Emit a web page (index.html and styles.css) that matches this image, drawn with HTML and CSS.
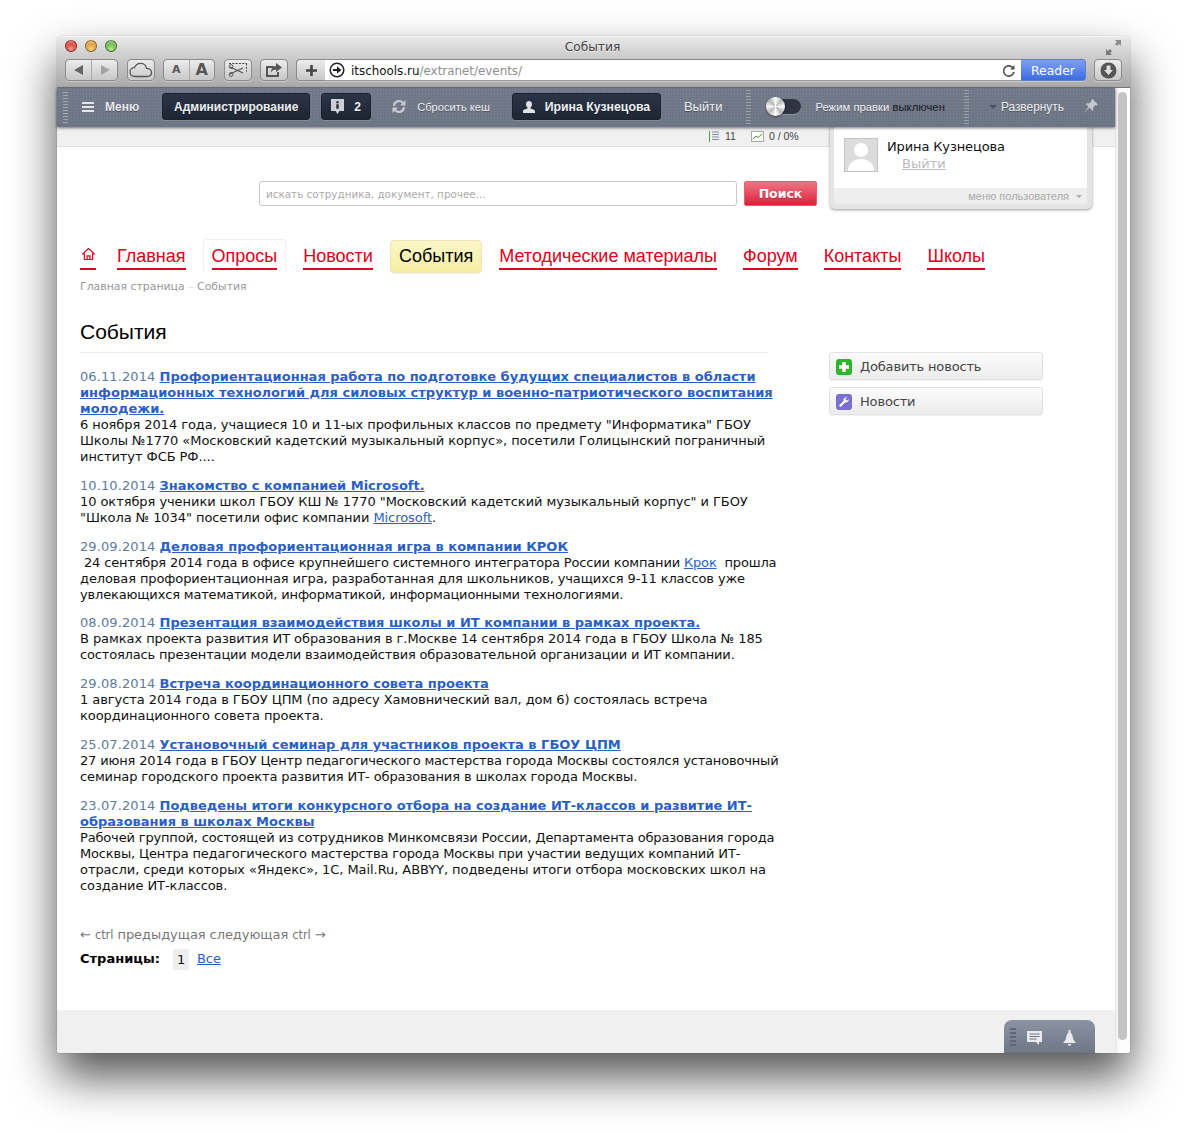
FILE: index.html
```html
<!DOCTYPE html>
<html lang="ru">
<head>
<meta charset="utf-8">
<title>События</title>
<link rel="stylesheet" href="styles.css">
</head>
<body>
<div class="window">
  <header class="chrome">
    <div class="titlebar">
      <div class="lights"><i class="light red"></i><i class="light amber"></i><i class="light green"></i></div>
      <div class="win-title">События</div>
      <svg class="fullscreen" width="17" height="17" viewBox="0 0 17 17"><path d="M10 1h6v6l-2-2-2 2-2-2 2-2z" fill="#8d8d8d"/><path d="M7 16H1v-6l2 2 2-2 2 2-2 2z" fill="#7a7a7a"/></svg>
    </div>
    <div class="toolbar">
      <div class="tbtn seg back">
        <span class="seg-cell"><svg width="12" height="12" viewBox="0 0 12 12"><path d="M10 1v10L1 6z" fill="#666"/></svg></span>
        <span class="seg-cell"><svg width="12" height="12" viewBox="0 0 12 12"><path d="M2 1v10l9-5z" fill="#a2a2a2"/></svg></span>
      </div>
      <div class="tbtn cloud"><svg width="24" height="16" viewBox="0 0 24 16"><path d="M6 14.500C3 14.500 1 12.500 1 10s2-4.300 4.500-4.300C6.500 3 9 1.300 11.500 1.300c3.200 0 5.500 2.200 6 5 2.800 0 5 1.800 5 4.200s-2 4-4.500 4z" fill="none" stroke="#555" stroke-width="1.300"/></svg></div>
      <div class="tbtn seg fonts"><span class="seg-cell small-a">A</span><span class="seg-cell big-a">A</span></div>
      <div class="tbtn clip"><svg width="20" height="16" viewBox="0 0 20 16"><path d="M1 1.500h18M18.500 1.500v8" stroke="#444" stroke-dasharray="2 1.300" fill="none"/><path d="M2 5l13 6M2 12l13-6" stroke="#555" stroke-width="1.200"/><circle cx="3" cy="4.500" r="1.900" fill="none" stroke="#555"/><circle cx="3" cy="12.500" r="1.900" fill="none" stroke="#555"/></svg></div>
      <div class="tbtn share"><svg width="18" height="15" viewBox="0 0 18 15"><path d="M1 3h8v2H3v7h9V9h2v5H1z" fill="#555"/><path d="M11 0l6 4.500L11 9V6.500c-2.500 0-4 1-5 3 0-4 2-6 5-6.500z" fill="#555"/></svg></div>
      <div class="urlbar">
        <div class="plus"><svg width="13" height="13" viewBox="0 0 13 13"><path d="M5.200 1h2.600v4.200H12v2.600H7.800V12H5.200V7.800H1V5.200h4.200z" fill="#444"/></svg></div>
        <div class="field">
          <svg class="go" width="16" height="16" viewBox="0 0 16 16"><circle cx="8" cy="8" r="6.800" fill="#fff" stroke="#222" stroke-width="1.500"/><path d="M3.800 7h4.200V4.300L12.400 8 8 11.700V9H3.800z" fill="#222"/></svg>
          <span class="url"><b class="host">itschools.ru</b>/extranet/events/</span>
          <svg class="reload" width="12" height="13" viewBox="0 0 12 13"><path d="M10 8a4.300 4.300 0 1 1-1.300-4.200L7 5.500h4.500V1L10 2.500A6 6 0 1 0 11.800 8z" fill="#555"/></svg>
        </div>
        <div class="reader">Reader</div>
      </div>
      <div class="tbtn download"><svg width="17" height="17" viewBox="0 0 17 17"><circle cx="8.500" cy="8.500" r="8" fill="#555"/><path d="M6.500 3.500h4V8h2.500l-4.500 5L4 8h2.500z" fill="#e0e0e0"/></svg></div>
    </div>
  </header>

  <div class="view">
    <div class="page">
      <nav class="panel">
        <i class="grip"></i>
        <a class="panel-menu"><svg width="12" height="10" viewBox="0 0 12 10"><path d="M0 0h12v2H0zM0 4h12v2H0zM0 8h12v2H0z" fill="#e4e6ea"/></svg>Меню</a>
        <a class="dark-btn admin">Администрирование</a>
        <a class="dark-btn info"><svg width="13" height="15" viewBox="0 0 13 15"><path d="M0 0h13v12H8.500L6.500 15l-2-3H0z" fill="#ccd0d6"/><path d="M5.300 2.300h2.400v1.900H5.300zM5.300 5.300h2.400v4.500H5.300z" fill="#232b3a"/></svg><span>2</span></a>
        <a class="cache"><svg width="18" height="17" viewBox="0 0 18 17"><path d="M3 8a6 6 0 0 1 10.500-4L15.500 2v5.500H10l2-2A4 4 0 0 0 5 8z" fill="#c9ccd2"/><path d="M15 9a6 6 0 0 1-10.500 4L2.500 15V9.500H8l-2 2A4 4 0 0 0 13 9z" fill="#c9ccd2"/></svg>Сбросить кеш</a>
        <a class="dark-btn user"><svg width="12" height="12" viewBox="0 0 12 12"><path d="M6 0c2 0 3 1.400 3 3.200 0 1.500-.7 2.800-1.500 3.300v.9c1.900.5 4.500 1 4.500 3V12H0v-1.600c0-2 2.600-2.500 4.500-3v-.9C3.700 6 3 4.700 3 3.200 3 1.400 4 0 6 0z" fill="#dfe2e6"/></svg>Ирина Кузнецова</a>
        <a class="logout">Выйти</a>
        <i class="dots sep-a"></i>
        <span class="toggle"><i class="knob"></i></span>
        <span class="mode">Режим правки <b class="mode-off">выключен</b></span>
        <i class="dots sep-b"></i>
        <a class="expand"><i class="caret"></i>Развернуть</a>
        <svg class="pin" width="15" height="15" viewBox="0 0 15 15"><path d="M9.500 0L15 5.500l-1.500 1-1-.5-2.500 2.500c.5 1.500.2 2.500-.5 3.500L6.500 8.500 1 14l4.500-6.500L2.500 5c1-.8 2-1 3.500-.5L8.500 2l-.2-1z" fill="#c3c7ce"/></svg>
      </nav>

      <div class="stats">
        <span class="stat"><svg width="11" height="11" viewBox="0 0 11 11"><path d="M.5 0v11" stroke="#5a9e3a"/><path d="M3 1h7M3 3.500h7M3 6h7M3 8.500h7" stroke="#7f8fa8"/></svg>11</span>
        <span class="stat"><svg width="13" height="11" viewBox="0 0 13 11"><rect x=".5" y=".5" width="12" height="10" fill="#fff" stroke="#aaa"/><path d="M2 8l3-3 2 1.500L11 3" fill="none" stroke="#4a9a2e"/></svg>0 / 0%</span>
      </div>

      <div class="search">
        <div class="search-input">искать сотрудника, документ, прочее...</div>
        <div class="search-btn">Поиск</div>
      </div>

      <ul class="menu">
        <li class="menu-item home"><a><svg width="13" height="12" viewBox="0 0 14 13"><path d="M7 .5L.5 6.500h2V12.500h9V6.500h2zM5.500 12V8.500h3V12" fill="none" stroke="#e0001b" stroke-width="1.300"/></svg></a></li>
        <li class="menu-item"><a>Главная</a></li>
        <li class="menu-item hovered"><a>Опросы</a></li>
        <li class="menu-item"><a>Новости</a></li>
        <li class="menu-item active"><a>События</a></li>
        <li class="menu-item"><a>Методические материалы</a></li>
        <li class="menu-item"><a>Форум</a></li>
        <li class="menu-item"><a>Контакты</a></li>
        <li class="menu-item"><a>Школы</a></li>
      </ul>

      <div class="crumbs">Главная страница <span class="crumb-sep">–</span> События</div>

      <div class="columns">
        <main class="main">
          <h1 class="heading">События</h1>
          <article class="news"><span class="date">06.11.2014</span> <a class="news-title">Профориентационная работа по подготовке будущих специалистов в области информационных технологий для силовых структур и военно-патриотического воспитания молодежи.</a><br>6 ноября 2014 года, учащиеся 10 и 11-ых профильных классов по предмету "Информатика" ГБОУ Школы №1770 «Московский кадетский музыкальный корпус», посетили Голицынский пограничный институт ФСБ РФ....</article>
          <article class="news"><span class="date">10.10.2014</span> <a class="news-title">Знакомство с компанией Microsoft.</a><br>10 октября ученики школ ГБОУ КШ № 1770 "Московский кадетский музыкальный корпус" и ГБОУ "Школа № 1034" посетили офис компании <a class="link">Microsoft</a>.</article>
          <article class="news"><span class="date">29.09.2014</span> <a class="news-title">Деловая профориентационная игра в компании КРОК</a>
            <span class="line fit-s">&nbsp;24 сентября 2014 года в офисе крупнейшего системного интегратора России компании <a class="link">Крок</a>&nbsp; прошла</span>
            <span class="line fit-xs">деловая профориентационная игра, разработанная для школьников, учащихся 9-11 классов уже</span>
            <span class="line fit-s">увлекающихся математикой, информатикой, информационными технологиями.</span></article>
          <article class="news"><span class="date">08.09.2014</span> <a class="news-title">Презентация взаимодействия школы и ИТ компании в рамках проекта.</a>
            <span class="line">В рамках проекта развития ИТ образования в г.Москве 14 сентября 2014 года в ГБОУ Школа № 185</span>
            <span class="line fit-s">состоялась презентации модели взаимодействия образовательной организации и ИТ компании.</span></article>
          <article class="news"><span class="date">29.08.2014</span> <a class="news-title">Встреча координационного совета проекта</a><br>1 августа 2014 года в ГБОУ ЦПМ (по адресу Хамовнический вал, дом 6) состоялась встреча координационного совета проекта.</article>
          <article class="news"><span class="date">25.07.2014</span> <a class="news-title">Установочный семинар для участников проекта в ГБОУ ЦПМ</a>
            <span class="line fit-s">27 июня 2014 года в ГБОУ Центр педагогического мастерства города Москвы состоялся установочный</span>
            <span class="line fit-xs">семинар городского проекта развития ИТ- образования в школах города Москвы.</span></article>
          <article class="news"><span class="date">23.07.2014</span> <a class="news-title">Подведены итоги конкурсного отбора на создание ИТ-классов и развитие ИТ-образования в школах Москвы</a>
            <span class="line fit-s">Рабочей группой, состоящей из сотрудников Минкомсвязи России, Департамента образования города</span>
            <span class="line fit-s">Москвы, Центра педагогического мастерства города Москвы при участии ведущих компаний ИТ-</span>
            <span class="line">отрасли, среди которых «Яндекс», 1С, Mail.Ru, ABBYY, подведены итоги отбора московских школ на</span>
            <span class="line">создание ИТ-классов.</span></article>
          <div class="prevnext">← <span class="ctrl">ctrl</span> предыдущая следующая <span class="ctrl">ctrl</span> →</div>
          <div class="pager"><b class="pager-label">Страницы:</b><span class="pager-cur">1</span><a class="link">Все</a></div>
        </main>
        <aside class="side">
          <a class="side-btn"><svg width="16" height="16" viewBox="0 0 16 16"><rect width="16" height="16" rx="3" fill="#2eb52a"/><path d="M6.300 3h3.400v3.300H13v3.400H9.700V13H6.300V9.700H3V6.300h3.300z" fill="#fff"/></svg>Добавить новость</a>
          <a class="side-btn"><svg width="16" height="16" viewBox="0 0 16 16"><rect width="16" height="16" rx="3" fill="#7b6fd0"/><path d="M3 11.500L7.500 7C7 5 8.500 3 11 3.300L9.300 5.200l1.500 1.500L12.700 5C13 7.500 11 9 9 8.500L4.500 13z" fill="#fff"/></svg>Новости</a>
        </aside>
      </div>

      <footer class="page-foot">
        <div class="dock">
          <i class="dock-grip"></i>
          <svg width="15" height="15" viewBox="0 0 15 15"><path d="M0 0h15v11h-3v3l-3-3H0z" fill="#e8eaee"/><path d="M2.500 3h10M2.500 5.500h10M2.500 8h7" stroke="#6d7585"/></svg>
          <svg width="15" height="17" viewBox="0 0 15 17"><path d="M6.500 0h2v2.500c1.500 1 2 3 2.500 5.500.4 2 1.500 3.500 3 5H1c1.500-1.500 2.600-3 3-5 .5-2.500 1-4.500 2.500-5.500zM6 14h3v1.500H6z" fill="#e8eaee"/></svg>
        </div>
      </footer>

      <div class="user-pop">
        <div class="user-pop-body">
          <svg width="34" height="34" viewBox="0 0 34 34"><rect width="34" height="34" fill="#c4c4c4"/><rect x="1" y="1" width="32" height="32" fill="#dcdcdc"/><circle cx="17" cy="12" r="7" fill="#fff"/><path d="M4 33c0-8 6-12 13-12s13 4 13 12z" fill="#fff"/></svg>
          <div class="user-pop-text">
            <div class="user-pop-name">Ирина Кузнецова</div>
            <a class="user-pop-out">Выйти</a>
          </div>
        </div>
        <div class="user-pop-foot">меню пользователя<i class="pop-caret"></i></div>
      </div>
    </div>
    <div class="scroll"><i class="thumb"></i></div>
  </div>
</div>
</body>
</html>
```

FILE: styles.css
```css
* { box-sizing: border-box; }
html, body { margin: 0; height: 1132px; overflow: hidden; background: #fff; }
body { padding: 36px 0 0 57px; font: 13px/16px "DejaVu Sans", Verdana, sans-serif; color: #111; }
ul { list-style: none; margin: 0; padding: 0; }
a { cursor: pointer; }

.window { width: 1073px; height: 1017px; display: flex; flex-direction: column; border-radius: 5px 5px 3px 3px; background: #fff; box-shadow: 0 24px 46px rgba(0,0,0,.68), 0 0 1px rgba(0,0,0,.6); }

/* browser chrome */
.chrome { height: 52px; flex: none; background: linear-gradient(#e9e9e9, #d2d2d2 30%, #a9a9a9); border-radius: 5px 5px 0 0; border-bottom: 1px solid #777; border-top: 1px solid #f4f4f4; padding: 0 8px; }
.titlebar { height: 22px; display: flex; align-items: center; justify-content: center; position: relative; }
.lights { position: absolute; left: 0; top: 3px; display: flex; gap: 8px; }
.light { width: 12px; height: 12px; border-radius: 50%; border: 1px solid rgba(0,0,0,.35); box-shadow: inset 0 2px 2px rgba(255,255,255,.4); }
.red { background: radial-gradient(circle at 50% 80%, #f59a95, #d8312b 65%); }
.amber { background: radial-gradient(circle at 50% 80%, #f7d68c, #d98f22 65%); }
.green { background: radial-gradient(circle at 50% 80%, #bce79a, #5fae3c 65%); }
.win-title { font-size: 12.200px; color: #444; text-shadow: 0 1px 0 rgba(255,255,255,.6); margin: -3px 2px 0 0; }
.fullscreen { position: absolute; right: 0; top: 2px; }
.toolbar { display: flex; align-items: flex-start; height: 22px; }
.tbtn { height: 22px; border: 1px solid #8b8b8b; border-radius: 4px; background: linear-gradient(#ececec, #c8c8c8); display: flex; align-items: center; justify-content: center; box-shadow: 0 1px 0 rgba(255,255,255,.35); flex: none; }
.back { width: 53px; }
.seg-cell { flex: 1; height: 100%; display: flex; align-items: center; justify-content: center; }
.seg-cell + .seg-cell { border-left: 1px solid #aaa; }
.cloud { width: 28px; margin-left: 9px; }
.fonts { width: 52px; margin-left: 8px; font-family: "DejaVu Sans", sans-serif; color: #555; font-weight: 700; }
.small-a { font-size: 11px; }
.big-a { font-size: 16px; }
.clip { width: 28px; margin-left: 9px; }
.share { width: 28px; margin-left: 8px; }
.urlbar { flex: 1; display: flex; height: 22px; margin-left: 8px; border-radius: 4px; box-shadow: 0 1px 0 rgba(255,255,255,.35); }
.plus { width: 29px; flex: none; border: 1px solid #8b8b8b; border-right: 0; border-radius: 4px 0 0 4px; background: linear-gradient(#ececec, #c8c8c8); display: flex; align-items: center; justify-content: center; }
.field { flex: 1; display: flex; align-items: center; background: #fff; border-top: 1px solid #8b8b8b; border-bottom: 1px solid #999; padding: 0 6px 0 4px; }
.go { flex: none; }
.url { margin-left: 6px; padding-top: 1px; font-size: 11.900px; color: #8f8f8f; flex: 1; }
.host { font-weight: 400; color: #111; }
.reader { width: 65px; flex: none; background: linear-gradient(#7f9ff2, #3c6ce2); color: #fff; border: 1px solid #5c7fc9; border-left: 0; border-radius: 0 4px 4px 0; font-size: 12.400px; line-height: 22px; text-align: center; }
.download { width: 28px; margin-left: 8px; }

/* page */
.view { flex: 1; display: flex; min-height: 0; }
.page { flex: 1; display: flex; flex-direction: column; position: relative; min-width: 0; }
.scroll { width: 15px; flex: none; background: linear-gradient(90deg, #f0f0f0, #fdfdfd 30%); border-left: 1px solid #e6e6e6; padding: 4px 2px 0 2px; border-radius: 0 0 3px 0; }
.thumb { display: block; width: 9px; height: 948px; background: #c4c4c4; border-radius: 5px; }

.panel { height: 39px; flex: none; display: flex; align-items: center; position: relative; z-index: 2; color: #e6e8ec; font-family: "Liberation Sans", Arial, sans-serif; font-weight: 700; font-size: 12px; padding: 0 0 2px 6px; background: radial-gradient(circle at 1px 1px, rgba(40,46,60,.08) .7px, transparent 1px) 0 0/3px 3px, linear-gradient(#767d8d, #717888); box-shadow: 0 1px 3px rgba(0,0,0,.55); text-shadow: 0 1px 0 rgba(0,0,0,.35); }
.grip { width: 5px; height: 32px; background: radial-gradient(circle, #a9aeb9 .8px, transparent 1px) 0 0/2.500px 3px; flex: none; }
.panel-menu { display: flex; align-items: center; gap: 11px; margin-left: 14px; }
.dark-btn { height: 27px; display: flex; align-items: center; justify-content: center; background: linear-gradient(#2c3547, #1e2533); border: 1px solid #1b2130; border-radius: 3px; color: #eef0f3; font-weight: 700; box-shadow: 0 1px 0 rgba(255,255,255,.14); flex: none; }
.admin { width: 148px; margin-left: 23px; }
.info { width: 50px; margin-left: 11px; gap: 10px; }
.cache { display: flex; align-items: center; gap: 9px; margin-left: 19px; font-size: 11.150px; font-weight: 400; color: #eef0f3; }
.user { width: 149px; margin-left: 22px; gap: 10px; font-size: 12.300px; }
.logout { margin-left: 23px; font-size: 13px; font-weight: 400; color: #eef0f3; }
.dots { width: 5px; height: 36px; background: radial-gradient(circle, #a0a5b0 .8px, transparent 1px) 0 0/2.500px 3px; flex: none; }
.sep-a { margin-left: 24px; }
.toggle { width: 34px; height: 15px; margin-left: 16px; background: #2f3543; border-radius: 8px; position: relative; flex: none; box-shadow: 0 1px 0 rgba(255,255,255,.2); }
.knob { position: absolute; left: -1px; top: -2px; width: 19px; height: 19px; border-radius: 50%; background: conic-gradient(#fff, #bbb, #f5f5f5, #b5b5b5, #fff, #bbb, #f5f5f5, #b5b5b5, #fff); box-shadow: 0 1px 2px rgba(0,0,0,.5); }
.mode { margin-left: 14px; font-size: 11.300px; font-weight: 400; white-space: nowrap; color: #eef0f3; }
.mode-off { font-weight: 400; color: #151a26; text-shadow: none; }
.sep-b { margin-left: 19px; }
.expand { display: flex; align-items: center; margin-left: 20px; font-size: 11.900px; font-weight: 400; gap: 4px; color: #eef0f3; }
.caret { width: 0; height: 0; border: 4px solid transparent; border-top-color: #4a5160; border-bottom: 0; }
.pin { margin-left: 19px; flex: none; }

.stats { height: 20px; flex: none; background: #f0f0f0; border-bottom: 1px solid #e0e0e0; display: flex; justify-content: flex-start; gap: 15px; padding: 2px 0 0 652px; font: 10.500px/14px "Liberation Sans", Arial, sans-serif; color: #444; }
.stat { display: flex; align-items: center; gap: 5px; height: 14px; }

.search { display: flex; gap: 7px; margin: 34px 0 0 202px; flex: none; }
.search-input { width: 478px; height: 25px; border: 1px solid #c8c8c8; border-radius: 3px; padding: 0 6px; font-size: 10.400px; line-height: 24px; color: #aaa; }
.search-btn { width: 73px; height: 25px; background: linear-gradient(#ec7684, #e01f39); border: 1px solid #e2626f; border-radius: 2px; color: #fff; font-weight: 700; font-size: 12.500px; line-height: 23px; text-align: center; text-shadow: 0 1px 0 rgba(120,0,0,.35); }

.menu { display: flex; margin: 34px 0 0 22px; height: 33px; flex: none; align-items: stretch; gap: 8px; font: 18px/33px "Liberation Sans", Arial, sans-serif; }
.menu-item { padding: 0 8px; border-radius: 4px; border: 1px solid transparent; display: flex; }
.menu-item a { color: #e0001b; display: block; height: 29px; border-bottom: 2px solid #e0001b; line-height: 30px; }
.menu-item.home { padding: 0; margin-right: 3px; }
.menu-item.home a { padding: 7px 0 0 2px; width: 16px; line-height: 0; }
.menu-item.hovered { border-color: #f1f1f1 #f1f1f1 transparent; margin-top: -1px; }
.menu-item.hovered a { height: 30px; line-height: 32px; }
.menu-item.active { background: linear-gradient(#fbf6c8, #f6efa2); border-color: #ebe4b4; box-shadow: 0 1px 1px rgba(0,0,0,.05); }
.menu-item.active a { color: #000; border-bottom: 0; }

.crumbs { margin: 6px 0 0 23px; font-size: 10.900px; line-height: 16px; color: #999; flex: none; }
.crumb-sep { color: #ddd; }

.columns { flex: 1; display: flex; min-height: 0; padding-left: 23px; }
.main { width: 702px; flex: none; letter-spacing: -.065px; }
.heading { width: 688px; margin: 24px 0 16px; height: 34px; border-bottom: 1px solid #eee; font: 400 21px/26px "Liberation Sans", Arial, sans-serif; color: #000; letter-spacing: 0; }
.news { margin-bottom: 12.830px; }
.date { color: #5e7c9e; letter-spacing: .1px; }
.news-title { font-weight: 700; color: #2a60c4; text-decoration: underline; letter-spacing: 0; }
.link { color: #2a60c4; text-decoration: underline; }
.line { display: block; white-space: nowrap; }
.fit-xs { letter-spacing: -.11px; }
.fit-s { letter-spacing: -.165px; }
.prevnext { margin-top: 33px; color: #777; }
.ctrl { font-size: 11.500px; }
.pager { display: flex; align-items: center; height: 21px; margin-top: 6px; }
.pager-label { color: #000; width: 93px; flex: none; letter-spacing: 0; }
.pager-cur { width: 16px; height: 21px; line-height: 21px; text-align: center; background: #eee; margin-right: 8px; }

.side { margin: 57px 0 0 47px; width: 214px; flex: none; display: flex; flex-direction: column; gap: 7px; }
.side-btn { height: 28px; display: flex; align-items: center; gap: 8px; padding: 1px 0 0 6px; border: 1px solid #e2e2e2; border-radius: 3px; background: linear-gradient(#fcfcfc, #ececec); color: #444; letter-spacing: -.17px; box-shadow: 0 1px 1px rgba(0,0,0,.05); }
.side-btn svg { flex: none; }

.page-foot { height: 43px; flex: none; background: #f0f0f0; display: flex; justify-content: flex-end; align-items: flex-end; padding-right: 20px; border-radius: 0 0 0 3px; }
.dock { width: 91px; height: 33px; border-radius: 8px 8px 0 0; background: linear-gradient(#8b92a2, #6f7787); display: flex; align-items: center; padding: 3px 0 0 6px; gap: 0; }
.dock svg:nth-of-type(1) { margin-left: 11px; }
.dock svg:nth-of-type(2) { margin-left: 20px; }
.dock-grip { width: 6px; height: 20px; background: repeating-linear-gradient(#5f6777 0 2px, transparent 2px 4px); flex: none; }

.user-pop { position: absolute; left: 773px; top: 39px; width: 262px; height: 82px; z-index: 1; background: #e4e4e4; border-radius: 0 0 5px 5px; padding: 0 5px 5px 4px; box-shadow: 0 1px 3px rgba(0,0,0,.4); }
.user-pop-body { height: 61px; background: #fff; padding: 11px 0 0 10px; display: flex; gap: 9px; }
.user-pop-name { font-size: 13px; color: #111; line-height: 16px; margin-top: 1px; letter-spacing: -.13px; }
.user-pop-out { display: block; margin: 0 0 0 15px; color: #bbb; text-decoration: underline; line-height: 17px; }
.user-pop-foot { height: 16px; background: #eee; display: flex; justify-content: flex-end; align-items: center; padding-right: 5px; font: 11px/16px "Liberation Sans", Arial, sans-serif; color: #aaa; gap: 7px; }
.pop-caret { width: 0; height: 0; border: 3px solid transparent; border-top-color: #aaa; border-bottom: 0; }
```
